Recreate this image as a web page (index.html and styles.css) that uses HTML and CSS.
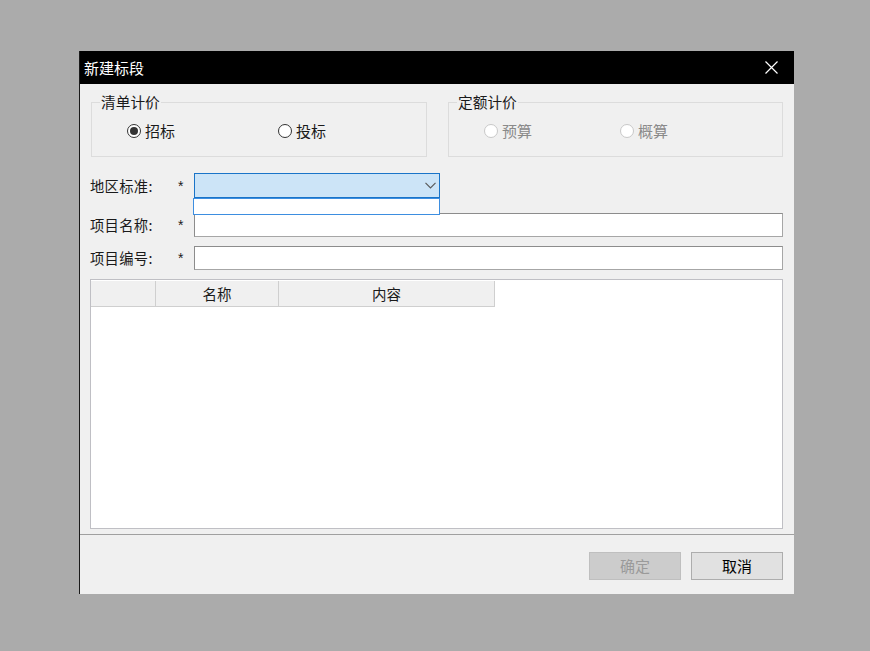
FILE: index.html
```html
<!DOCTYPE html>
<html lang="zh-CN">
<head>
<meta charset="utf-8">
<title>新建标段</title>
<link rel="stylesheet" href="styles.css">
</head>
<body>
<div class="dialog">
  <div class="titlebar">
    <span class="title">新建标段</span>
    <span class="close">
      <svg width="13" height="13" viewBox="0 0 13 13"><path d="M0.5 0.5 L12.5 12.5 M12.5 0.5 L0.5 12.5" stroke="#fff" stroke-width="1.2" fill="none"/></svg>
    </span>
  </div>
  <div class="main">
    <div class="groups">
      <fieldset class="group">
        <legend>清单计价</legend>
        <div class="opts">
          <label class="opt opt-wide"><span class="radio checked"></span><span>招标</span></label>
          <label class="opt"><span class="radio"></span><span>投标</span></label>
        </div>
      </fieldset>
      <fieldset class="group">
        <legend>定额计价</legend>
        <div class="opts">
          <label class="opt opt-mid disabled"><span class="radio"></span><span>预算</span></label>
          <label class="opt disabled"><span class="radio"></span><span>概算</span></label>
        </div>
      </fieldset>
    </div>
    <div class="row row-first">
      <span class="label">地区标准:</span><span class="star">*</span>
      <div class="combo">
        <svg class="chev" width="11" height="7" viewBox="0 0 11 7"><path d="M0.5 0.8 L5.5 5.8 L10.5 0.8" stroke="#5a5a5a" stroke-width="1.2" fill="none"/></svg>
        <div class="droplist"></div>
      </div>
    </div>
    <div class="row row-second">
      <span class="label">项目名称:</span><span class="star">*</span>
      <div class="input"></div>
    </div>
    <div class="row row-third">
      <span class="label">项目编号:</span><span class="star">*</span>
      <div class="input"></div>
    </div>
    <div class="grid">
      <div class="grid-head">
        <div class="hcell hcell-idx"></div>
        <div class="hcell hcell-name">名称</div>
        <div class="hcell hcell-content">内容</div>
      </div>
    </div>
  </div>
  <div class="footer">
    <button class="btn btn-disabled">确定</button>
    <button class="btn">取消</button>
  </div>
</div>
</body>
</html>
```
FILE: styles.css
```css
* { box-sizing: border-box; }
html, body { margin: 0; padding: 0; }
body {
  background: #ababab;
  width: 870px;
  height: 651px;
  overflow: hidden;
  font-family: "Noto Sans CJK SC", "Microsoft YaHei", sans-serif;
  font-size: 14px;
  color: #1a1a1a;
}
.dialog {
  margin: 51px 0 0 79px;
  width: 715px;
  height: 543px;
  background: #f0f0f0;
  border-left: 1px solid #1a1a1a;
  display: flex;
  flex-direction: column;
}
.titlebar {
  height: 33px;
  background: #000;
  color: #fff;
  display: flex;
  align-items: center;
  justify-content: space-between;
  padding: 0 16px 0 4px;
  flex: none;
}
.title { font-size: 15px; line-height: 18px; }
.close { display: flex; align-items: center; }
.main {
  height: 450px;
  flex: none;
  padding: 0 11px 0 10px;
  display: flex;
  flex-direction: column;
}
.groups {
  display: flex;
  gap: 21px;
  margin-top: 10px;
  padding-left: 1px;
}
.group {
  margin: 0;
  padding: 0;
  border: 1px solid #dcdcdc;
  min-width: 0;
}
.group:first-child { width: 336px; }
.group:last-child { width: 335px; }
.group legend {
  margin-left: 8px;
  padding: 0 1px;
  font-size: 14.7px;
  line-height: 16px;
  color: #1a1a1a;
}
.opts {
  height: 46px;
  padding: 0 0 4px 35px;
  display: flex;
  align-items: center;
}
.opt {
  display: flex;
  align-items: center;
  gap: 4px;
  font-size: 15px;
  line-height: 16px;
  width: 120px;
}
.opt-wide { width: 151px; }
.opt-mid { width: 136px; }
.radio {
  width: 14px;
  height: 14px;
  border-radius: 50%;
  border: 1px solid #333;
  background: #fff;
  display: flex;
  align-items: center;
  justify-content: center;
  flex: none;
}
.radio.checked::after {
  content: "";
  width: 8px;
  height: 8px;
  border-radius: 50%;
  background: #333;
}
.opt.disabled { color: #8a8a8a; }
.opt.disabled .radio { border-color: #c8c8c8; background: #fff; }
.row {
  display: flex;
  align-items: center;
}
.row-first { margin-top: 16px; }
.row-second { margin-top: 15px; }
.row-third { margin-top: 9px; }
.label {
  width: 88px;
  line-height: 16px;
  font-size: 14.3px;
}
.label { letter-spacing: 0.3px; }
.star {
  width: 16px;
  line-height: 16px;
  font-family: "Liberation Sans", sans-serif;
  font-size: 14px;
  color: #1a1a1a;
}
.combo {
  position: relative;
  width: 246px;
  height: 25px;
  background: #cce4f7;
  border: 1px solid #1a74c8;
  display: flex;
  align-items: center;
  justify-content: flex-end;
  padding-right: 3px;
}
.chev { display: block; }
.droplist {
  position: absolute;
  left: -2px;
  top: 24px;
  width: 247px;
  height: 17px;
  background: #fff;
  border: 1px solid #3d8ee0;
}
.input {
  flex: 1;
  height: 24px;
  background: #fff;
  border: 1px solid #8c8c8c;
  border-right-color: #a6a6a6;
  border-bottom-color: #a6a6a6;
}
.grid {
  margin-top: 9px;
  height: 250px;
  background: #fff;
  border: 1px solid #bfbfc4;
  padding: 1px 0 0 0;
}
.grid-head {
  display: flex;
  height: 26px;
}
.hcell {
  background: #f0f0f0;
  border-right: 1px solid #cfcfcf;
  border-bottom: 1px solid #cfcfcf;
  display: flex;
  align-items: center;
  justify-content: center;
  font-size: 14.5px;
  line-height: 16px;
  color: #1a1a1a;
}
.hcell-idx { width: 65px; }
.hcell-name { width: 123px; }
.hcell-content { width: 216px; }
.footer {
  flex: 1;
  border-top: 1px solid #a0a0a0;
  display: flex;
  justify-content: flex-end;
  align-items: flex-start;
  gap: 10px;
  padding: 17px 11px 0 0;
}
.btn {
  width: 92px;
  height: 28px;
  font-family: "Noto Sans CJK SC", "Microsoft YaHei", sans-serif;
  font-size: 15px;
  line-height: 16px;
  background: #e1e1e1;
  border: 1px solid #adadad;
  color: #000;
  padding: 0;
  margin: 0;
}
.btn-disabled {
  background: #cccccc;
  border-color: #bfbfbf;
  color: #9a9a9a;
}
```
